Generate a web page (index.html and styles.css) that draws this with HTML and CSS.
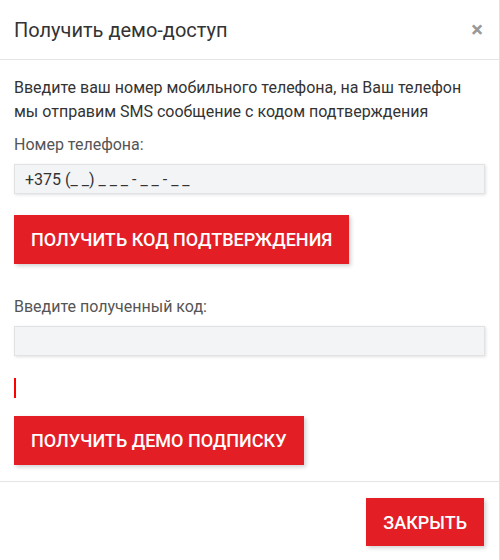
FILE: index.html
```
<!DOCTYPE html>
<html lang="ru">
<head>
    <meta charset="UTF-8">
    <meta name="viewport" content="width=device-width, initial-scale=1.0">
    <title>Получить демо-доступ</title>
    <link rel="stylesheet" href="styles.css">
</head>
<body>
    <div class="modal">
        <div class="modal-header">
            <h4 class="modal-title">Получить демо-доступ</h4>
            <button class="close" type="button">&times;</button>
        </div>
        <div class="modal-body">
            <p class="intro">Введите ваш номер мобильного телефона, на Ваш телефон мы отправим SMS сообщение с кодом подтверждения</p>
            <label class="label" for="phone">Номер телефона:</label>
            <input class="field" type="text" id="phone" value="+375 (_ _) _ _ _ - _ _ - _ _">
            <button class="btn btn-code" type="button">Получить код подтверждения</button>
            <label class="label label-code" for="code">Введите полученный код:</label>
            <input class="field" type="text" id="code">
            <div class="error-mark"></div>
            <button class="btn btn-demo" type="button">Получить демо подписку</button>
        </div>
        <div class="modal-footer">
            <button class="btn btn-close" type="button">Закрыть</button>
        </div>
    </div>
</body>
</html>
```
FILE: styles.css
```
body {
    margin: 0;
    padding: 0;
    background: #fff;
    font-family: Roboto, "Liberation Sans", Arial, sans-serif;
    color: #333;
}
.modal {
    width: 500px;
    height: 560px;
    border-right: 1px solid #e2e2e2;
    box-sizing: border-box;
}
.modal-header {
    height: 60px;
    padding: 0 16px 0 14px;
    display: flex;
    align-items: center;
    justify-content: space-between;
    border-bottom: 1px solid #e5e5e5;
    box-sizing: border-box;
}
.modal-title {
    margin: 0;
    font-size: 20px;
    font-weight: 400;
    color: #333;
}
.close {
    background: none;
    border: none;
    padding: 0;
    font-family: inherit;
    font-size: 22px;
    font-weight: 700;
    color: #999;
    line-height: 1;
    cursor: pointer;
}
.modal-body {
    padding: 16px 14px 16px 14px;
    display: flex;
    flex-direction: column;
    align-items: flex-start;
    border-bottom: 1px solid #e5e5e5;
}
.intro {
    margin: 0 0 9px 0;
    font-size: 16px;
    line-height: 24px;
    color: #333;
}
.label {
    font-size: 16px;
    line-height: 24px;
    color: #555;
    margin-bottom: 7px;
}
.label-code {
    margin-top: 31px;
}
.field {
    width: 471px;
    height: 30px;
    box-sizing: border-box;
    padding: 0 10px;
    background: #f3f4f6;
    border: 1px solid #e1e2e4;
    box-shadow: 1px 1px 3px rgba(0, 0, 0, 0.12);
    font-family: inherit;
    font-size: 16px;
    color: #333;
}
.btn {
    background: #e31e25;
    color: #fff;
    border: none;
    font-family: inherit;
    font-size: 18px;
    font-weight: 500;
    text-transform: uppercase;
    height: 49px;
    padding: 0 17px;
    box-shadow: 2px 2px 4px rgba(0, 0, 0, 0.18);
    cursor: pointer;
}
.btn-code {
    margin-top: 21px;
}
.error-mark {
    width: 2px;
    height: 20px;
    background: #ff0000;
    margin-top: 22px;
}
.btn-demo {
    margin-top: 18px;
}
.modal-footer {
    display: flex;
    justify-content: flex-end;
    padding: 16px 15px 0 0;
}
.btn-close {
    height: 48px;
}
```
